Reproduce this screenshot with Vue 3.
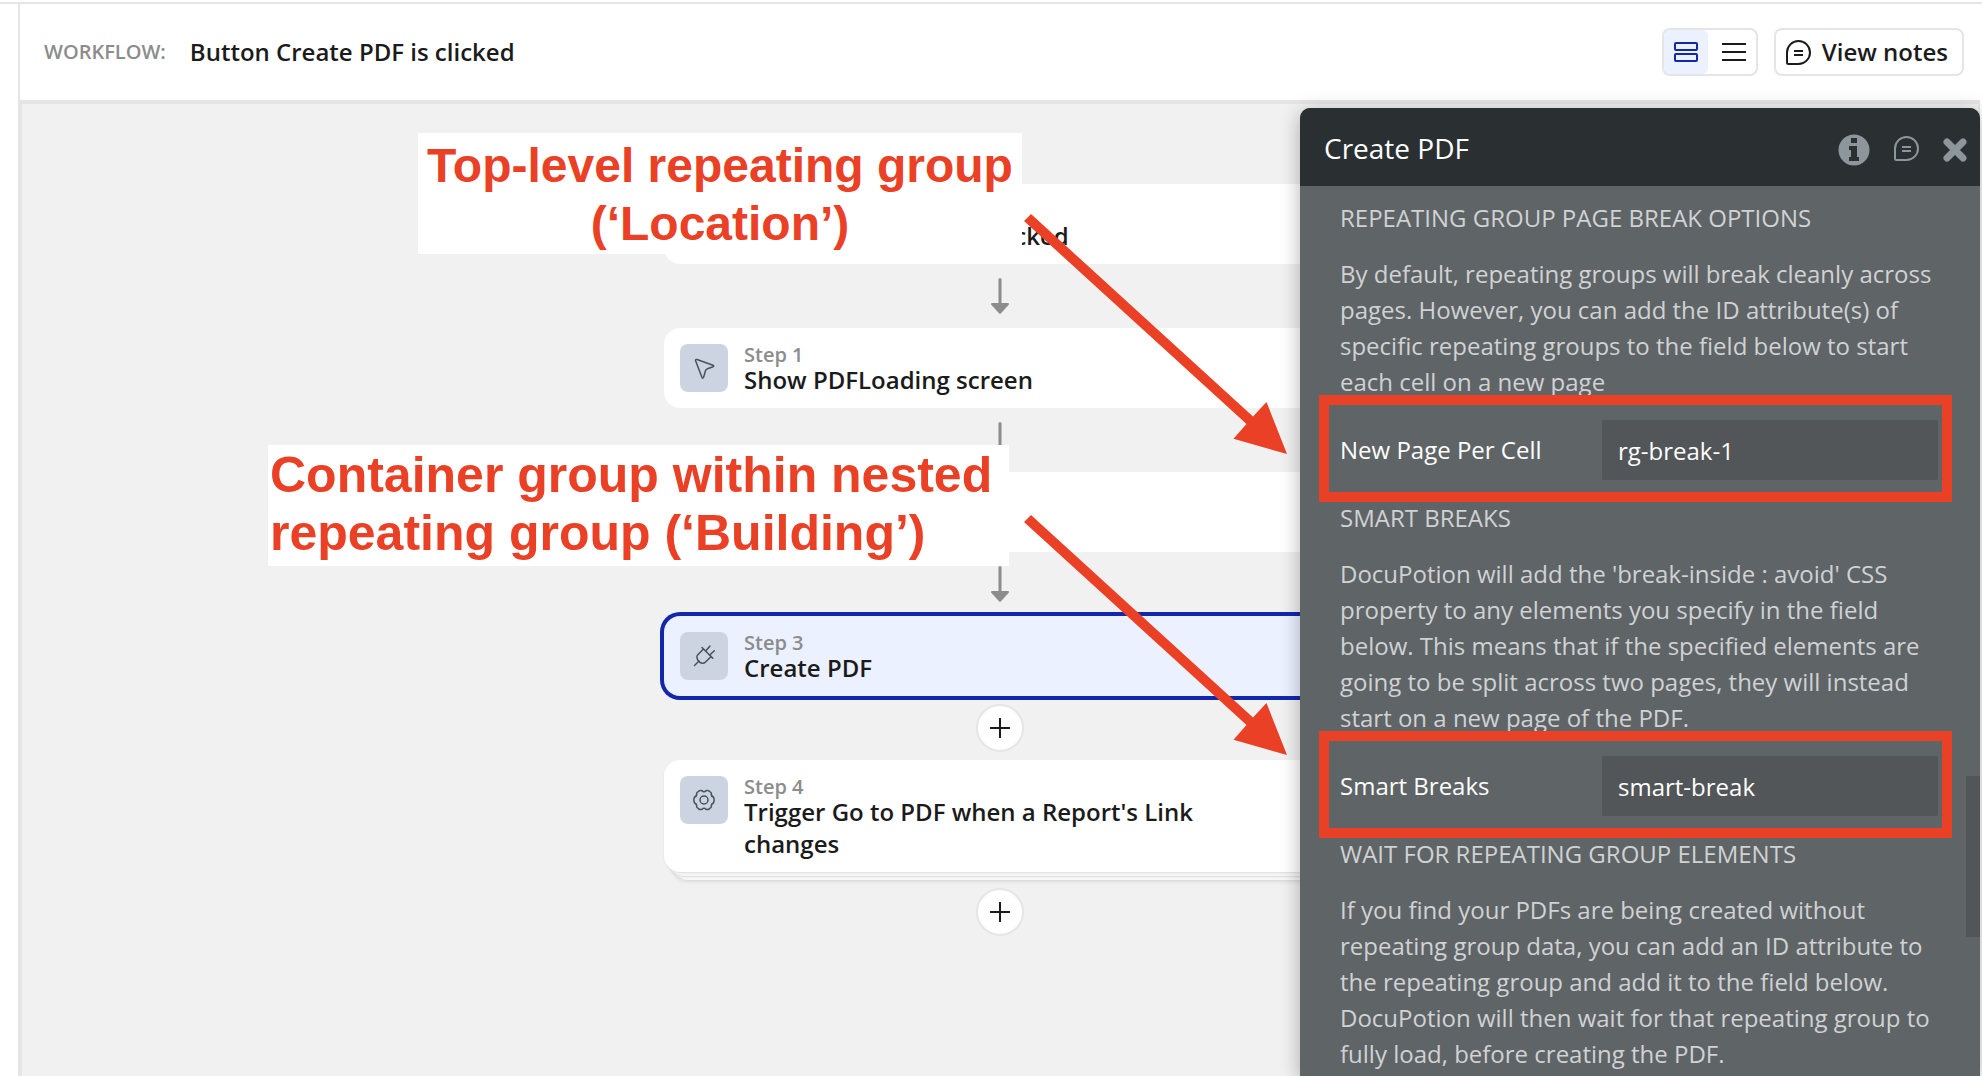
<template>
  <div class="page">
    <div class="editor">
      <header class="topbar">
        <span class="topbar-label">WORKFLOW:</span>
        <h1 class="topbar-title">Button Create PDF is clicked</h1>

        <div class="view-toggle">
          <button
            type="button"
            class="toggle-btn"
            :class="{ active: view === 'cards' }"
            aria-label="Card view"
            @click="view = 'cards'"
          >
            <svg width="24" height="24" viewBox="0 0 24 24" fill="none" stroke="currentColor" stroke-width="2">
              <rect x="1" y="3" width="22" height="7" rx="1" />
              <rect x="1" y="14" width="22" height="7" rx="1" />
            </svg>
          </button>
          <button
            type="button"
            class="toggle-btn"
            :class="{ active: view === 'list' }"
            aria-label="List view"
            @click="view = 'list'"
          >
            <svg width="24" height="24" viewBox="0 0 24 24" fill="none" stroke="currentColor" stroke-width="2">
              <path d="M0 4h24M0 12h24M0 20h24" />
            </svg>
          </button>
        </div>

        <button type="button" class="notes-btn">
          <svg width="25" height="25" viewBox="0 0 25 25" fill="none" stroke="currentColor" stroke-width="2">
            <path :d="noteIcon" />
            <path d="M8 11h9M8 15h9" />
          </svg>
          View notes
        </button>
      </header>

      <main class="canvas">
        <div class="flow">
          <template v-for="step in steps" :key="step.id">
            <div class="card" :class="{ selected: step.selected, stacked: step.stacked }">
              <div v-if="step.icon" class="card-icon">
                <svg width="48" height="48" viewBox="0 0 48 48">
                  <path v-for="d in icons[step.icon]" :key="d" :d="d" />
                </svg>
              </div>
              <div class="card-text">
                <div v-if="step.label" class="card-label">{{ step.label }}</div>
                <div class="card-title">{{ step.title }}</div>
              </div>
            </div>

            <div class="link">
              <button v-if="step.add" type="button" class="add-btn" aria-label="Add step">
                <svg width="20" height="20" viewBox="0 0 20 20" fill="none" stroke="currentColor" stroke-width="2">
                  <path d="M10 0v20M0 10h20" />
                </svg>
              </button>
              <svg v-else width="18" height="36" viewBox="0 0 18 36" fill="#8c8c8c">
                <path d="M7.5 1.5a1.5 1.5 0 0 1 3 0V25H16.500c1.500 0 2 1 1 2L10 35.300q-1 1-2 0L.500 27c-1-1-.5-2 1-2H7.500z" />
              </svg>
            </div>
          </template>
        </div>

        <!-- free-form notes drawn over the canvas -->
        <div class="annotations">
          <p class="note note-location">Top-level repeating group<br />(‘Location’)</p>
          <p class="note note-building">Container group within nested<br />repeating group (‘Building’)</p>
          <svg class="note-arrows" width="1956" height="972" viewBox="22 104 1956 972" fill="#ea4025">
            <path :d="arrow" />
            <path :d="arrow" transform="translate(0 301)" />
          </svg>
        </div>
      </main>

      <aside class="panel">
        <div class="panel-header">
          <h2>Create PDF</h2>
          <button type="button" class="icon-btn" aria-label="Info">
            <svg width="32" height="36" viewBox="0 -4 32 36">
              <circle cx="16" cy="16" r="15.500" fill="#8d969b" />
              <path d="M13 4h6v5h-6zM11 12h8v11h2v4H11v-4h2v-7h-2z" fill="#2a2f32" />
            </svg>
          </button>
          <button type="button" class="icon-btn" aria-label="Notes">
            <svg width="25" height="25" viewBox="0 0 25 25" fill="none" stroke="#8d969b" stroke-width="2">
              <path :d="noteIcon" />
              <path d="M8 11h9M8 15h9" />
            </svg>
          </button>
          <button type="button" class="icon-btn" aria-label="Close">
            <svg width="24" height="28" viewBox="0 0 24 28" fill="none" stroke="#8d969b" stroke-width="7">
              <path d="M4 8l16 16M20 8L4 24" stroke-linecap="round" />
            </svg>
          </button>
        </div>

        <div class="panel-body">
          <template v-for="section in sections" :key="section.heading">
            <h3>{{ section.heading }}</h3>
            <p>{{ section.text }}</p>
            <div v-if="section.field" class="field">
              <label :for="section.field">{{ section.label }}</label>
              <input :id="section.field" v-model="form[section.field]" type="text" />
            </div>
          </template>
        </div>
        <div class="panel-scroll"></div>
      </aside>
    </div>
  </div>
</template>

<script setup>
import { reactive, ref } from 'vue'

const view = ref('cards')

const form = reactive({
  newPage: 'rg-break-1',
  smartBreaks: 'smart-break'
})

const steps = [
  { id: 0, title: 'Button Create PDF is clicked' },
  { id: 1, label: 'Step 1', title: 'Show PDFLoading screen', icon: 'cursor' },
  { id: 2 },
  { id: 3, label: 'Step 3', title: 'Create PDF', icon: 'plug', selected: true, add: true },
  {
    id: 4,
    label: 'Step 4',
    title: "Trigger Go to PDF when a Report's Link changes",
    icon: 'gear',
    stacked: true,
    add: true
  }
]

const sections = [
  {
    heading: 'REPEATING GROUP PAGE BREAK OPTIONS',
    text: 'By default, repeating groups will break cleanly across pages. However, you can add the ID attribute(s) of specific repeating groups to the field below to start each cell on a new page',
    field: 'newPage',
    label: 'New Page Per Cell'
  },
  {
    heading: 'SMART BREAKS',
    text: "DocuPotion will add the 'break-inside : avoid' CSS property to any elements you specify in the field below. This means that if the specified elements are going to be split across two pages, they will instead start on a new page of the PDF.",
    field: 'smartBreaks',
    label: 'Smart Breaks'
  },
  {
    heading: 'WAIT FOR REPEATING GROUP ELEMENTS',
    text: 'If you find your PDFs are being created without repeating group data, you can add an ID attribute to the repeating group and add it to the field below. DocuPotion will then wait for that repeating group to fully load, before creating the PDF.'
  }
]

const noteIcon = 'M1 12.5A11.5 11.5 0 1 1 12.5 24H2.500A1.500 1.500 0 0 1 1 22.500z'
const arrow = 'M1024 221L1031 214L1253 416.500L1266.500 402L1287 454L1233.500 438.700L1246.500 424z'

const icons = {
  cursor: [
    'M15.500 16.500Q15.300 15 17 15.500L33 21.300Q34.500 22 33 22.800L27.500 24.800Q26 25.300 25.500 26.800L23.500 33.500Q22.700 35 22 33.500z'
  ],
  plug: [
    'M14.500 33.500l4.500-4.500',
    'M22 15.500l10.800 10.800',
    'M23.500 17L17.800 22.700Q16.500 24 17 26Q18 30.300 22 31.200Q24 31.600 25.300 30.300L31.200 24.500',
    'M25.700 19l4.300-5M29.700 23l4.600-4.300'
  ],
  gear: [
    'M33.600 26.900Q31 27.500 31.300 30.800Q29.200 34.200 26.250 33.500Q24 31 21.750 33.500Q18.800 34.200 16.700 30.800Q17 27.500 14.400 26.900Q13.200 24 14.400 21.100Q17 20.500 16.700 17.200Q18.800 13.800 21.750 14.500Q24 17 26.250 14.500Q29.200 13.800 31.300 17.200Q31 20.500 33.600 21.100Q34.800 24 33.600 26.900z',
    'M28 24a4 4 0 1 1-8 0a4 4 0 1 1 8 0z'
  ]
}
</script>

<style>
body {
  margin: 0;
}
</style>

<style scoped>
.page {
  box-sizing: border-box;
  height: 100vh;
  padding-top: 2px;
  display: flex;
  flex-direction: column;
  overflow: hidden;
  background: white;
  color: #1b1b1b;
  font-family: "Open Sans", "Noto Sans", sans-serif;
  font-size: 24px;
  line-height: 32px;
}

.page::before {
  content: '';
  flex: none;
  height: 2px;
  background: #e5e5e5;
}

.page *,
.page *::before,
.page *::after {
  box-sizing: border-box;
}

.editor {
  position: relative;
  flex: 1;
  min-height: 0;
  margin: 0 2px 0 18px;
  border-left: 2px solid #e5e5e5;
  display: flex;
  flex-direction: column;
}

button {
  padding: 0;
  border: none;
  background: none;
  color: inherit;
  font: inherit;
  cursor: pointer;
}

svg {
  display: block;
}

/* top bar */
.topbar {
  flex: none;
  height: 96px;
  padding: 0 16px 0 24px;
  display: flex;
  align-items: center;
}

.topbar-label {
  color: #8c8c8c;
  font-size: 20px;
  font-weight: 600;
}

.topbar-title {
  margin: 0 auto 0 24px;
  font-size: 24px;
  font-weight: 600;
}

.view-toggle {
  display: flex;
  gap: 4px;
  margin-right: 16px;
  border: 2px solid #e5e5e5;
  border-radius: 8px;
}

.toggle-btn {
  width: 44px;
  height: 44px;
  border-radius: 6px;
  display: flex;
  align-items: center;
  justify-content: center;
}

.toggle-btn.active {
  background: #ebf1fe;
  color: #1228aa;
}

.notes-btn {
  height: 48px;
  padding: 0 14px 0 10px;
  border: 2px solid #e5e5e5;
  border-radius: 8px;
  display: flex;
  align-items: center;
  gap: 11px;
  font-weight: 600;
}

/* canvas */
.canvas {
  position: relative;
  flex: 1;
  min-height: 0;
  border: 2px solid #e5e5e5;
  border-top-width: 4px;
  border-bottom: none;
  background: #f1f1f1;
  overflow: hidden;
}

.flow {
  max-width: 672px;
  margin: 0 auto;
  padding-top: 80px;
}

.card {
  min-height: 80px;
  padding: 12px 16px;
  border-radius: 16px;
  display: flex;
  gap: 16px;
  background: white;
}

.card.selected {
  background: #ebf1fe;
  box-shadow: 0 0 0 4px #1228aa;
}

.card.stacked {
  margin-bottom: 8px;
  box-shadow: 0 1px 2px #dedede, 4px 4px 0 #f6f6f6, 4px 5px 2px #dadada,
    8px 8px 0 #f8f8f8, 8px 9px 4px #cfcfcf;
}

.card-icon {
  flex: none;
  width: 48px;
  height: 48px;
  margin-top: 4px;
  border-radius: 8px;
  background: #ccd4e2;
}

.card-icon path {
  fill: none;
  stroke: #465260;
  stroke-width: 1.5;
  stroke-linecap: round;
  stroke-linejoin: round;
}

.card-text {
  max-width: 480px;
  display: flex;
  flex-direction: column;
  justify-content: flex-end;
  font-weight: 600;
}

.card-label {
  margin-bottom: -6px;
  color: #8c8c8c;
  font-size: 20px;
  line-height: 30px;
}

/* the trigger card has no icon, keep its text in the same column */
.card-text:first-child {
  margin-left: 64px;
}

.link {
  height: 64px;
  display: flex;
  align-items: center;
  justify-content: center;
}

.add-btn {
  width: 48px;
  height: 48px;
  border: 2px solid #e5e5e5;
  border-radius: 50%;
  display: flex;
  align-items: center;
  justify-content: center;
  background: white;
}

/* annotations */
.annotations {
  position: absolute;
  top: 0;
  left: 50%;
  width: 1956px;
  margin-left: -978px;
  pointer-events: none;
}

.note {
  position: absolute;
  margin: 0;
  background: white;
  color: #ea4025;
  font-family: "Liberation Sans", Arial, sans-serif;
  font-weight: 700;
  line-height: 58px;
  white-space: nowrap;
}

.note-location {
  top: 29px;
  left: 396px;
  width: 604px;
  padding: 4px 4px 1px;
  font-size: 48px;
  text-align: center;
}

.note-building {
  top: 341px;
  left: 246px;
  width: 741px;
  padding: 1px 2px 4px;
  font-size: 50px;
}

.note-arrows {
  position: absolute;
  top: 0;
  left: 0;
}

/* property panel */
.panel {
  position: absolute;
  top: 104px;
  right: 0;
  bottom: 0;
  width: 680px;
  border-radius: 10px 10px 0 0;
  display: flex;
  flex-direction: column;
  background: #5f6467;
  color: white;
  box-shadow: 0 4px 20px rgba(0, 0, 0, 0.3);
}

.panel-header {
  flex: none;
  height: 78px;
  padding: 2px 13px 0 24px;
  border-radius: 10px 10px 0 0;
  display: flex;
  align-items: center;
  gap: 24px;
  background: #2a2f32;
}

.panel-header h2 {
  flex: 1;
  margin: 0;
  font-size: 28px;
  font-weight: 400;
}

.panel-body {
  flex: 1;
  min-height: 0;
  padding: 14px 42px 0 40px;
  overflow: hidden;
  line-height: 36px;
}

.panel-body h3,
.panel-body p {
  margin: 0 0 20px;
  color: #d0d2d3;
  font-size: 24px;
  font-weight: 400;
}

.field {
  position: relative;
  margin-bottom: 20px;
  display: flex;
  align-items: center;
}

.field::after {
  content: '';
  position: absolute;
  inset: -25px -14px -22px -21px;
  border: 10px solid #ea4025;
  pointer-events: none;
}

.field label {
  flex: 1;
}

.field input {
  width: 336px;
  height: 60px;
  padding: 0 16px;
  border: none;
  border-radius: 2px;
  background: #525659;
  color: white;
  font: inherit;
}

.panel-scroll {
  position: absolute;
  top: 668px;
  right: 0;
  width: 14px;
  height: 161px;
  background: #525659;
}
</style>
